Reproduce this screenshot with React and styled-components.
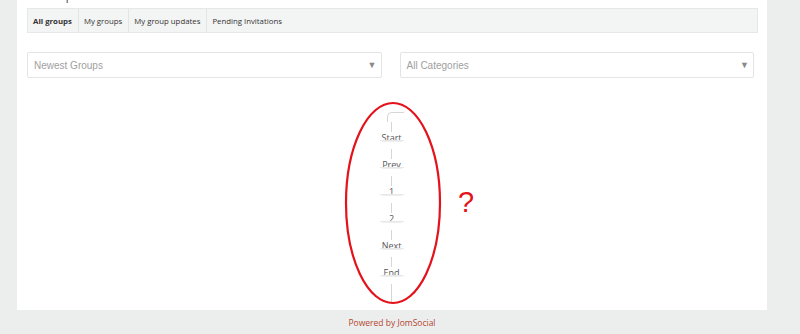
import React from 'react'
import styled, { createGlobalStyle } from 'styled-components'

const Global = createGlobalStyle`
  html, body {
    margin: 0;
    padding: 0;
    background: #eceeee;
    font-family: "Open Sans", "Liberation Sans", sans-serif;
  }
`

const tabs = ['All groups', 'My groups', 'My group updates', 'Pending Invitations']
const pages = ['Start', 'Prev', '1', '2', 'Next', 'End']

const App = () => {
  return (
    <>
      <Global />
      <Page>
        <Panel>
          <Heading>Groups</Heading>
          <TabBar>
            {tabs.map((t, i) => (
              <Tab key={t} active={i === 0} last={i === tabs.length - 1}>{t}</Tab>
            ))}
          </TabBar>
          <Filters>
            <Select>
              <span>Newest Groups</span>
              <Arrow>▼</Arrow>
            </Select>
            <Select>
              <span>All Categories</span>
              <Arrow>▼</Arrow>
            </Select>
          </Filters>
          <PagerArea>
            <Pager>
              <Corner />
              {pages.map(p => (
                <PageItem key={p}>
                  <Stem />
                  <PageLink>{p}</PageLink>
                </PageItem>
              ))}
              <Stem tall />
            </Pager>
            <Marker viewBox="0 0 120 210" width="120" height="210">
              <ellipse cx="60" cy="104" rx="47" ry="100" fill="none" stroke="#e4121b" strokeWidth="2.2" />
            </Marker>
            <Question>?</Question>
          </PagerArea>
        </Panel>
        <Footer>Powered by JomSocial</Footer>
      </Page>
    </>
  )
}

export default App

const Page = styled.div`
  width: 800px;
  height: 334px;
  overflow: hidden;
  display: flex;
  flex-direction: column;
  padding-left: 17px;
  box-sizing: border-box;
`
const Panel = styled.div`
  width: 750px;
  height: 310px;
  background: #fff;
  padding: 8px 9px 0 10px;
  box-sizing: border-box;
  position: relative;
`
const Heading = styled.div`
  position: absolute;
  top: -14px;
  left: 18px;
  font-size: 13px;
  color: #555;
`
const TabBar = styled.div`
  display: flex;
  height: 25px;
  background: #f3f4f4;
  border: 1px solid #e6e8e8;
  box-sizing: border-box;
`
const Tab = styled.div`
  display: flex;
  align-items: center;
  padding: 0 6px 0 5px;
  font-size: 7.8px;
  color: #333;
  font-weight: ${p => (p.active ? 700 : 400)};
  border-right: ${p => (p.last ? 'none' : '1px solid #e3e5e5')};
`
const Filters = styled.div`
  display: flex;
  gap: 18px;
  margin-top: 19px;
  padding-right: 4px;
`
const Select = styled.div`
  flex: 1;
  height: 26px;
  border: 1px solid #e3e5e5;
  border-radius: 2px;
  box-sizing: border-box;
  display: flex;
  align-items: center;
  justify-content: space-between;
  padding: 0 4px 0 6px;
  font-family: "Liberation Sans", Arial, sans-serif;
  font-size: 10px;
  color: #a0a0a0;
`
const Arrow = styled.span`
  font-size: 9px;
  color: #8a8a8a;
`
const PagerArea = styled.div`
  position: relative;
  display: flex;
  justify-content: center;
  margin-top: 34px;
  margin-left: -2px;
`
const Pager = styled.div`
  display: flex;
  flex-direction: column;
  align-items: center;
  width: 24px;
`
const Corner = styled.div`
  width: 17px;
  height: 10px;
  margin-left: 7px;
  border-top: 1px solid #d6d6d6;
  border-left: 1px solid #d6d6d6;
  border-top-left-radius: 5px;
  box-sizing: border-box;
`
const PageItem = styled.div`
  display: flex;
  flex-direction: column;
  align-items: center;
  width: 24px;
`
const Stem = styled.div`
  width: 1px;
  height: ${p => (p.tall ? 20 : 10)}px;
  background: #d6d6d6;
`
const PageLink = styled.div`
  width: 24px;
  height: 8px;
  margin-bottom: 8px;
  overflow: hidden;
  text-align: center;
  font-size: 9px;
  line-height: 12px;
  color: #555;
  border-bottom: 1px solid #e8e8e8;
  box-shadow: 0 3px 0 -2px #eee;
`
const Marker = styled.svg`
  position: absolute;
  left: 308px;
  top: -13px;
`
const Question = styled.div`
  position: absolute;
  left: 433px;
  top: 74px;
  font-family: "Liberation Sans", Arial, sans-serif;
  font-size: 29px;
  color: #e4121b;
`
const Footer = styled.div`
  height: 24px;
  width: 750px;
  display: flex;
  align-items: center;
  justify-content: center;
  font-size: 8.5px;
  color: #b4442e;
`
